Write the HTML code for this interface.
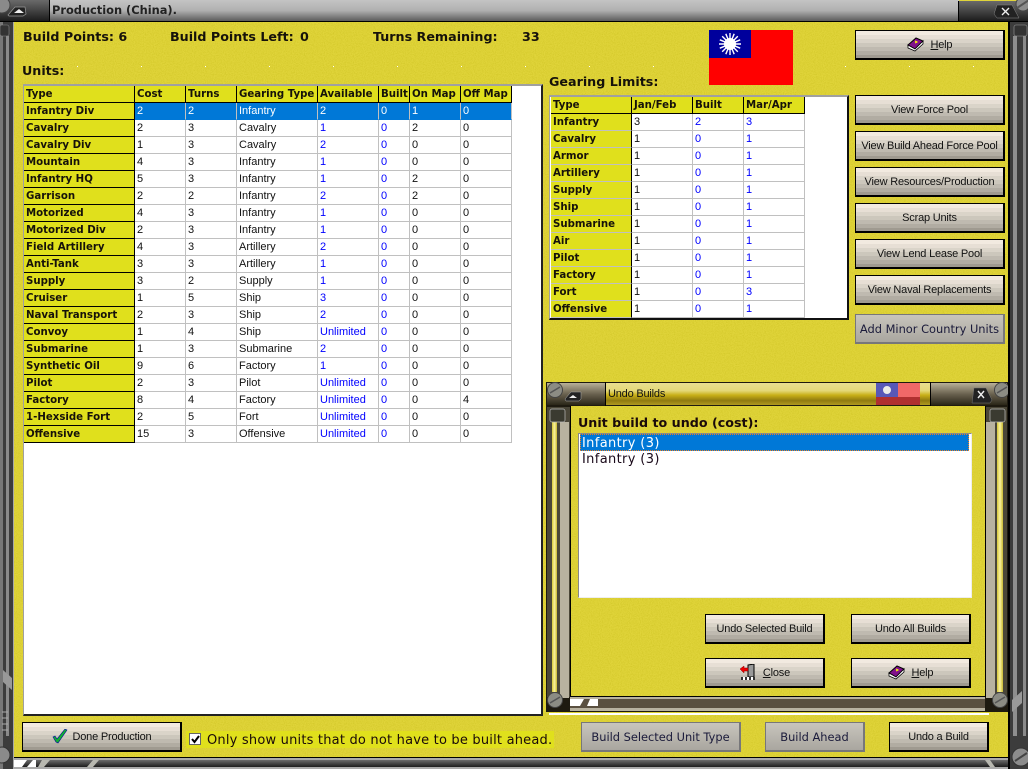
<!DOCTYPE html>
<html><head><meta charset="utf-8"><title>Production (China).</title>
<style>
html,body{margin:0;padding:0;background:#555}
#p{position:relative;width:1028px;height:769px;overflow:hidden;background:#e0d43a;font-family:"Liberation Sans",sans-serif;font-size:11px;color:#000}
#p>*{position:absolute}
.b{font-family:"DejaVu Sans",sans-serif;font-weight:bold;color:#16120a;white-space:nowrap;font-size:12.7px;line-height:17px}
.btn{box-sizing:border-box;border:1px solid #000;border-width:1px 2px 2px 1px;text-align:center;font-size:11px;letter-spacing:-.2px;line-height:28px;color:#111;white-space:nowrap;
background:linear-gradient(#f2eae0 0 4px,#e7dfd5 4px 8px,#dad4c9 8px 12px,#ccc7bc 12px 16px,#bfbab0 16px 20px,#b1aca2 20px 24px,#9f9a90 24px 30px)}
.dis{box-sizing:border-box;border:1px solid #77777a;border-width:1px 2px 2px 1px;background:linear-gradient(#c8c5bd,#a9a69f);text-align:center;font-family:"DejaVu Sans",sans-serif;font-size:11.4px;line-height:29px;color:#1a1a3a;white-space:nowrap}
.btn svg{vertical-align:-4px;margin-right:3px}
table{border-collapse:separate;border-spacing:0;table-layout:fixed;position:absolute}
td,th{box-sizing:border-box;height:17px;padding:0 0 0 2px;border-right:1px solid #c0c0c0;border-bottom:1px solid #c0c0c0;font-size:11px;line-height:16px;font-weight:normal;text-align:left;white-space:nowrap;overflow:hidden;color:#111;background:#fff}
th{font-family:"DejaVu Sans",sans-serif;font-size:10.2px;font-weight:bold;background:#e0e01c;color:#16120a;border-right-color:#000;border-bottom-color:#000;padding-top:1px;line-height:15px}
.g th{border-bottom-color:#c0c0c0}
.g tr:first-child th{border-bottom-color:#000}
td.n{color:#0000ff}
tr.s td{background:#0078d7;color:#fff;border-right-color:#c0c0c0;border-bottom-color:#0078d7}
</style></head><body>
<div id="p">
<svg style="left:0;top:0" width="1028" height="769" viewBox="0 0 1028 769">
<defs>
<filter id="nz" x="0" y="0" width="100%" height="100%"><feTurbulence type="fractalNoise" baseFrequency=".9" numOctaves="2" seed="4"/><feColorMatrix values="0 0 0 0 .45 0 0 0 0 .4 0 0 0 0 0 .6 0 0 0 -.22"/></filter>
<linearGradient id="tg" x1="0" y1="0" x2="0" y2="1"><stop offset="0" stop-color="#c4c4c4"/><stop offset=".5" stop-color="#b0b0b0"/><stop offset="1" stop-color="#5c5c5c"/></linearGradient>
<linearGradient id="dg" x1="0" y1="0" x2="0" y2="1"><stop offset="0" stop-color="#6a6a6a"/><stop offset=".5" stop-color="#444"/><stop offset="1" stop-color="#1c1c1c"/></linearGradient>
<linearGradient id="ug" x1="0" y1="0" x2="0" y2="1"><stop offset="0" stop-color="#e9df90"/><stop offset=".35" stop-color="#e4d878"/><stop offset=".55" stop-color="#c8b018"/><stop offset=".8" stop-color="#8f7a10"/><stop offset="1" stop-color="#b09a20"/></linearGradient>
<linearGradient id="bg" x1="0" y1="0" x2="0" y2="1"><stop offset="0" stop-color="#b8b098"/><stop offset=".5" stop-color="#6a6250"/><stop offset="1" stop-color="#2a2618"/></linearGradient>
<linearGradient id="yb" x1="0" y1="0" x2="1" y2="0"><stop offset="0" stop-color="#d8c838"/><stop offset=".5" stop-color="#f8f0a0"/><stop offset="1" stop-color="#c8b830"/></linearGradient>
</defs>
<rect x="14" y="22" width="994" height="735" fill="#000" filter="url(#nz)"/>
<!-- left frame -->
<rect x="0" y="22" width="14" height="747" fill="#3c3c3c"/>
<rect x="0" y="22" width="3" height="747" fill="#777"/>
<rect x="6" y="36" width="3" height="700" fill="#8a8a8a"/>
<rect x="13" y="22" width="1" height="747" fill="#a8a8a8"/>
<rect x="0" y="25" width="9" height="11" rx="2" fill="#333" stroke="#888" stroke-width=".6"/>
<path d="M3 670l9 8v12l-9-8z" fill="#999"/>
<path d="M2 712h6M2 718h6M2 724h6M2 730h6" stroke="#aaa"/>
<circle cx="2" cy="755" r="8" fill="#8a8a8a" stroke="#333"/>
<!-- right frame -->
<rect x="1008" y="22" width="2" height="747" fill="#000"/>
<rect x="1010" y="22" width="18" height="747" fill="#3c3c3c"/>
<rect x="1013" y="36" width="4" height="700" fill="#8e8e8e"/>
<rect x="1023" y="36" width="3" height="700" fill="#8a8a8a"/>
<rect x="1014" y="25" width="13" height="11" rx="2" fill="#333" stroke="#999" stroke-width=".6"/>
<path d="M1012 700l10-9v12l-10 9z" fill="#999"/>
<circle cx="1021" cy="757" r="9" fill="#8c8c8c" stroke="#333"/><path d="M1015 761l12-8" stroke="#444" stroke-width="2"/>
<!-- title -->
<rect x="49" y="0" width="910" height="21" fill="url(#tg)"/>
<rect x="0" y="0" width="49" height="21" fill="url(#dg)"/>
<rect x="958" y="1" width="70" height="20" fill="url(#dg)"/>
<rect x="0" y="21" width="1028" height="1" fill="#000"/>
<rect x="49" y="0" width="1" height="21" fill="#000"/>
<rect x="958" y="1" width="1" height="20" fill="#000"/>
<circle cx="2" cy="5" r="8" fill="#8a8a8a" stroke="#444"/>
<path d="M8 15l7-8h10l1 7-3 2H9z" fill="#222" stroke="#999" stroke-width=".7"/><path d="M14 13l5-4 5 4z" fill="#eee"/>
<path d="M1012 5h-15l-3 9 3 4h22z" fill="#222" stroke="#888" stroke-width=".5"/><path d="M1002 8l7 7m0-7l-7 7" stroke="#eee" stroke-width="1.4"/>
<circle cx="1023" cy="4" r="7" fill="#8c8c8c" stroke="#444"/><path d="M1017 8l12-8" stroke="#555" stroke-width="2"/>
<!-- bottom -->
<rect x="14" y="757" width="994" height="1" fill="#000"/>
<rect x="14" y="758" width="994" height="2" fill="#aaa"/>
<rect x="14" y="760" width="994" height="7" fill="url(#dg)"/>
<rect x="14" y="767" width="994" height="2" fill="#aaa"/>
<path d="M14 760h13l-5 7h-8zM33 760h3v7h-9z" fill="#fff"/>
<path d="M42 760h8l-6 7h-6zM93 760h6l-6 7h-6zM985 760h5l5 7h-5z" fill="#b8b8b0"/>
</svg>
<div style="left:77px;top:66px;width:900px;height:1px;background:repeating-linear-gradient(90deg,#fff 0 1px,transparent 1px 64px)"></div>

<div style="left:52px;top:3px;font-family:'DejaVu Sans',sans-serif;font-weight:bold;font-size:11.4px;line-height:15px;color:#222;white-space:nowrap">Production (China).</div>

<div class="b" style="left:23px;top:28px">Build Points: 6</div>
<div class="b" style="left:170px;top:28px">Build Points Left:</div>
<div class="b" style="left:300px;top:28px">0</div>
<div class="b" style="left:373px;top:28px">Turns Remaining:</div>
<div class="b" style="left:522px;top:28px">33</div>
<div class="b" style="left:22px;top:62px">Units:</div>
<div class="b" style="left:549px;top:73px">Gearing Limits:</div>

<svg style="left:709px;top:30px" width="84" height="55" viewBox="0 0 84 55">
<rect width="84" height="55" fill="#f00"/><rect width="42" height="28" fill="#00009c"/>
<g stroke="#fff" stroke-width="1.4"><path d="M21 3v22M10 14h22M13.2 6.2l15.6 15.6M28.8 6.2L13.2 21.8M16.8 3.8l8.4 20.4M25.2 3.8l-8.4 20.4M10.8 9.8l20.4 8.4M31.2 9.8l-20.4 8.4"/></g>
<circle cx="21" cy="14" r="6" fill="#fff"/>
</svg>

<!-- units table -->
<div style="left:23px;top:84px;width:520px;height:632px;box-sizing:border-box;background:#fff;border-top:2px solid #a0a0a0;border-left:1px solid #a0a0a0;border-right:2px solid #222;border-bottom:2px solid #222"></div>
<table style="left:24px;top:86px;width:488px">
<colgroup><col style="width:111px"><col style="width:51px"><col style="width:51px"><col style="width:81px"><col style="width:61px"><col style="width:31px"><col style="width:51px"><col style="width:51px"></colgroup>
<tr><th>Type</th><th>Cost</th><th>Turns</th><th>Gearing Type</th><th>Available</th><th>Built</th><th>On Map</th><th>Off Map</th></tr>
<tr class="s"><th>Infantry Div</th><td>2</td><td>2</td><td>Infantry</td><td>2</td><td>0</td><td>1</td><td>0</td></tr>
<tr><th>Cavalry</th><td>2</td><td>3</td><td>Cavalry</td><td class="n">1</td><td class="n">0</td><td>2</td><td>0</td></tr>
<tr><th>Cavalry Div</th><td>1</td><td>3</td><td>Cavalry</td><td class="n">2</td><td class="n">0</td><td>0</td><td>0</td></tr>
<tr><th>Mountain</th><td>4</td><td>3</td><td>Infantry</td><td class="n">1</td><td class="n">0</td><td>0</td><td>0</td></tr>
<tr><th>Infantry HQ</th><td>5</td><td>3</td><td>Infantry</td><td class="n">1</td><td class="n">0</td><td>2</td><td>0</td></tr>
<tr><th>Garrison</th><td>2</td><td>2</td><td>Infantry</td><td class="n">2</td><td class="n">0</td><td>2</td><td>0</td></tr>
<tr><th>Motorized</th><td>4</td><td>3</td><td>Infantry</td><td class="n">1</td><td class="n">0</td><td>0</td><td>0</td></tr>
<tr><th>Motorized Div</th><td>2</td><td>3</td><td>Infantry</td><td class="n">1</td><td class="n">0</td><td>0</td><td>0</td></tr>
<tr><th>Field Artillery</th><td>4</td><td>3</td><td>Artillery</td><td class="n">2</td><td class="n">0</td><td>0</td><td>0</td></tr>
<tr><th>Anti-Tank</th><td>3</td><td>3</td><td>Artillery</td><td class="n">1</td><td class="n">0</td><td>0</td><td>0</td></tr>
<tr><th>Supply</th><td>3</td><td>2</td><td>Supply</td><td class="n">1</td><td class="n">0</td><td>0</td><td>0</td></tr>
<tr><th>Cruiser</th><td>1</td><td>5</td><td>Ship</td><td class="n">3</td><td class="n">0</td><td>0</td><td>0</td></tr>
<tr><th>Naval Transport</th><td>2</td><td>3</td><td>Ship</td><td class="n">2</td><td class="n">0</td><td>0</td><td>0</td></tr>
<tr><th>Convoy</th><td>1</td><td>4</td><td>Ship</td><td class="n">Unlimited</td><td class="n">0</td><td>0</td><td>0</td></tr>
<tr><th>Submarine</th><td>1</td><td>3</td><td>Submarine</td><td class="n">2</td><td class="n">0</td><td>0</td><td>0</td></tr>
<tr><th>Synthetic Oil</th><td>9</td><td>6</td><td>Factory</td><td class="n">1</td><td class="n">0</td><td>0</td><td>0</td></tr>
<tr><th>Pilot</th><td>2</td><td>3</td><td>Pilot</td><td class="n">Unlimited</td><td class="n">0</td><td>0</td><td>0</td></tr>
<tr><th>Factory</th><td>8</td><td>4</td><td>Factory</td><td class="n">Unlimited</td><td class="n">0</td><td>0</td><td>4</td></tr>
<tr><th>1-Hexside Fort</th><td>2</td><td>5</td><td>Fort</td><td class="n">Unlimited</td><td class="n">0</td><td>0</td><td>0</td></tr>
<tr><th>Offensive</th><td>15</td><td>3</td><td>Offensive</td><td class="n">Unlimited</td><td class="n">0</td><td>0</td><td>0</td></tr>
</table>

<!-- gearing table -->
<div style="left:549px;top:95px;width:300px;height:225px;box-sizing:border-box;background:#fff;border-top:2px solid #a0a0a0;border-left:1px solid #a0a0a0;border-right:2px solid #111;border-bottom:2px solid #111"></div>
<table class="g" style="left:551px;top:97px;width:254px">
<colgroup><col style="width:81px"><col style="width:61px"><col style="width:51px"><col style="width:61px"></colgroup>
<tr><th>Type</th><th>Jan/Feb</th><th>Built</th><th>Mar/Apr</th></tr>
<tr><th>Infantry</th><td>3</td><td class="n">2</td><td class="n">3</td></tr>
<tr><th>Cavalry</th><td>1</td><td class="n">0</td><td class="n">1</td></tr>
<tr><th>Armor</th><td>1</td><td class="n">0</td><td class="n">1</td></tr>
<tr><th>Artillery</th><td>1</td><td class="n">0</td><td class="n">1</td></tr>
<tr><th>Supply</th><td>1</td><td class="n">0</td><td class="n">1</td></tr>
<tr><th>Ship</th><td>1</td><td class="n">0</td><td class="n">1</td></tr>
<tr><th>Submarine</th><td>1</td><td class="n">0</td><td class="n">1</td></tr>
<tr><th>Air</th><td>1</td><td class="n">0</td><td class="n">1</td></tr>
<tr><th>Pilot</th><td>1</td><td class="n">0</td><td class="n">1</td></tr>
<tr><th>Factory</th><td>1</td><td class="n">0</td><td class="n">1</td></tr>
<tr><th>Fort</th><td>1</td><td class="n">0</td><td class="n">3</td></tr>
<tr><th>Offensive</th><td>1</td><td class="n">0</td><td class="n">1</td></tr>
</table>

<!-- right buttons -->
<div class="btn" style="left:855px;top:30px;width:150px;height:30px"><svg width="18" height="16" viewBox="0 0 18 16"><path d="M1 9l8-7 7 3-8 8z" fill="#80108a" stroke="#000"/><path d="M1 9l0 3 7 3 8-7v-3l-8 8z" fill="#fff" stroke="#000" stroke-width=".8"/><path d="M8 5l2 1-2 1" stroke="#ff0" fill="none"/></svg> <u>H</u>elp</div>
<div class="btn" style="left:855px;top:95px;width:150px;height:30px">View Force Pool</div>
<div class="btn" style="left:855px;top:131px;width:150px;height:30px">View Build Ahead Force Pool</div>
<div class="btn" style="left:855px;top:167px;width:150px;height:30px">View Resources/Production</div>
<div class="btn" style="left:855px;top:203px;width:150px;height:30px">Scrap Units</div>
<div class="btn" style="left:855px;top:239px;width:150px;height:30px">View Lend Lease Pool</div>
<div class="btn" style="left:855px;top:275px;width:150px;height:30px">View Naval Replacements</div>
<div class="dis" style="left:855px;top:314px;width:150px;height:30px">Add Minor Country Units</div>

<!-- undo dialog -->
<svg style="left:546px;top:382px" width="462" height="334" viewBox="0 0 462 334">
<rect x="0" y="0" width="462" height="330" fill="#1e1a10"/>
<rect x="59" y="1" width="325" height="22" fill="url(#ug)"/>
<rect x="1" y="1" width="58" height="22" fill="url(#bg)"/>
<rect x="384" y="1" width="77" height="22" fill="url(#bg)"/>
<rect x="59" y="0" width="1" height="24" fill="#000"/><rect x="384" y="0" width="1" height="24" fill="#000"/>
<rect x="330" y="1" width="44" height="22" fill="#b03030"/>
<rect x="330" y="1" width="44" height="14" fill="#f06868"/>
<rect x="330" y="1" width="22" height="14" fill="#5858b8"/>
<circle cx="341" cy="8" r="4" fill="#ecece8"/>
<circle cx="9" cy="8" r="7.5" fill="#8c8c84" stroke="#444"/><path d="M4 11l10-6" stroke="#555" stroke-width="1.6"/>
<path d="M19 17l6-7h10v7l-2 2H20z" fill="#222" stroke="#aaa" stroke-width=".5"/><path d="M23 16l4-3 4 3z" fill="#eee"/>
<circle cx="456" cy="8" r="7.5" fill="#8c8c84" stroke="#444"/><path d="M451 11l10-6" stroke="#555" stroke-width="1.6"/>
<path d="M428 6h12l6 12-2 3h-18z" fill="#222" stroke="#777" stroke-width=".5"/><path d="M432 9l6 7m0-7l-6 7" stroke="#eee" stroke-width="1.4"/>
<!-- side frames -->
<rect x="1" y="25" width="23" height="290" fill="#4a4638"/>
<rect x="14" y="40" width="9" height="276" fill="#b8b2a0"/>
<rect x="6" y="40" width="5" height="270" fill="url(#yb)"/>
<rect x="4" y="27" width="15" height="13" rx="2" fill="#3a3a30" stroke="#bbb" stroke-width=".7"/>
<rect x="439" y="25" width="22" height="290" fill="#4a4638"/>
<rect x="440" y="40" width="9" height="276" fill="#b8b2a0"/>
<rect x="451" y="40" width="6" height="270" fill="url(#yb)"/>
<rect x="444" y="27" width="15" height="13" rx="2" fill="#3a3a30" stroke="#bbb" stroke-width=".7"/>
<!-- interior -->
<rect x="24" y="24" width="416" height="291" fill="#000"/>
<rect x="25" y="24" width="414" height="290" fill="#e0d43a"/>
<rect x="25" y="24" width="414" height="290" fill="#000" filter="url(#nz)"/>
<!-- bottom -->
<rect x="24" y="315" width="415" height="14" fill="#5a5040"/>
<rect x="24" y="315" width="415" height="2" fill="#b8b2a0"/>
<rect x="24" y="326" width="415" height="3" fill="#b8b2a0"/>
<path d="M24 317h14l-4 7H24zM44 317h8v7h-11z" fill="#fff"/>
<circle cx="9" cy="318" r="7.5" fill="#8c8c84" stroke="#444"/><path d="M4 321l10-6" stroke="#555" stroke-width="1.6"/>
<circle cx="454" cy="318" r="7.5" fill="#8c8c84" stroke="#444"/><path d="M449 321l10-6" stroke="#555" stroke-width="1.6"/>
<rect x="3" y="331" width="440" height="2" fill="#fff"/>
</svg>
<div style="left:608px;top:387px;font-size:11px;letter-spacing:-.2px;line-height:14px;color:#111;white-space:nowrap">Undo Builds</div>
<div class="b" style="left:578px;top:414px;color:#1a0a0a">Unit build to undo (cost):</div>
<div style="left:578px;top:433px;width:394px;height:165px;box-sizing:border-box;background:#fff;border-top:1px solid #888;border-left:1px solid #888;border-right:1px solid #eee;border-bottom:1px solid #eee"></div>
<div style="left:580px;top:434px;width:389px;height:17px;box-sizing:border-box;background:#0078d7;border:1px dotted #f08020"></div>
<div style="left:582px;top:436px;font-family:'DejaVu Sans',sans-serif;font-size:13px;letter-spacing:.35px;line-height:16px;color:#fff;white-space:nowrap">Infantry (3)</div>
<div style="left:582px;top:452px;font-family:'DejaVu Sans',sans-serif;font-size:13px;letter-spacing:.35px;line-height:16px;color:#1a0a1a;white-space:nowrap">Infantry (3)</div>
<div class="btn" style="left:705px;top:614px;width:120px;height:30px">Undo Selected Build</div>
<div class="btn" style="left:851px;top:614px;width:120px;height:30px">Undo All Builds</div>
<div class="btn" style="left:705px;top:658px;width:120px;height:30px"><svg width="18" height="16" viewBox="0 0 18 16"><path d="M9 1l6-1v13H9z" fill="#999" stroke="#000"/><path d="M1 5l4-3v2h4v3H5v2z" fill="#e00" stroke="#800" stroke-width=".5"/><path d="M2 13h14v3H2z" fill="#333"/><path d="M4 13h2v3H4zM8 13h2v3H8zM12 13h2v3h-2z" fill="#fff"/></svg> <u>C</u>lose</div>
<div class="btn" style="left:851px;top:658px;width:120px;height:30px"><svg width="18" height="16" viewBox="0 0 18 16"><path d="M1 9l8-7 7 3-8 8z" fill="#80108a" stroke="#000"/><path d="M1 9l0 3 7 3 8-7v-3l-8 8z" fill="#fff" stroke="#000" stroke-width=".8"/><path d="M8 5l2 1-2 1" stroke="#ff0" fill="none"/></svg> <u>H</u>elp</div>

<!-- bottom row -->
<div class="btn" style="left:22px;top:722px;width:160px;height:30px"><svg width="16" height="15" viewBox="0 0 16 15" style="margin-right:5px"><path d="M1 8l3 5 2 1 9-13-2-1-8 10-2-3z" fill="#10b030" stroke="#0000a0" stroke-width=".6"/></svg>Done Production</div>
<div style="left:186px;top:731px;width:368px;height:17px;background:#e0e01c"></div>
<div style="left:189px;top:733px;width:12px;height:12px;box-sizing:border-box;background:#fff;border:1px solid #666"></div>
<svg style="left:190px;top:734px" width="11" height="11" viewBox="0 0 11 11"><path d="M2 5l2.5 3L9 2" fill="none" stroke="#000" stroke-width="2"/></svg>
<div style="left:207px;top:732px;font-family:'DejaVu Sans',sans-serif;font-size:13px;line-height:17px;color:#1a0a0a;white-space:nowrap;letter-spacing:.2px">Only show units that do not have to be built ahead.</div>
<div class="dis" style="left:581px;top:722px;width:160px;height:30px">Build Selected Unit Type</div>
<div class="dis" style="left:765px;top:722px;width:100px;height:30px">Build Ahead</div>
<div class="btn" style="left:889px;top:722px;width:100px;height:30px">Undo a Build</div>
</div>
</body></html>
